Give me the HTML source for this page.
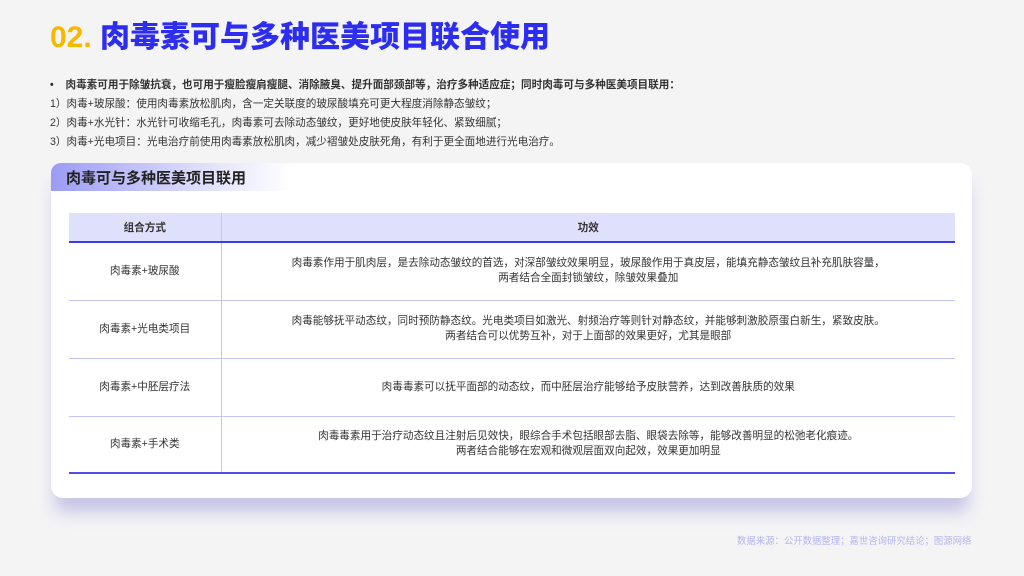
<!DOCTYPE html>
<html><head><meta charset="utf-8"><style>
*{margin:0;padding:0;box-sizing:border-box}
body{width:1024px;height:576px;background:#f4f4f5;font-family:"Liberation Sans","Noto Sans CJK SC",sans-serif;position:relative;overflow:hidden;color:#333}
.t{position:absolute;left:50px;top:12px;font-size:30px;font-weight:900;color:#2d2df2;white-space:nowrap;letter-spacing:0}
.t span{color:#f9b800}
.p{position:absolute;left:50px;font-size:10.6px;color:#333;white-space:nowrap}
.card{position:absolute;left:51px;top:163px;width:921px;height:335px;background:#fff;border-radius:12px;box-shadow:0 18px 16px -4px rgba(165,165,220,.6)}
.tab{position:absolute;left:51px;top:163px;width:240px;height:28px;border-radius:10px 0 0 0;background:linear-gradient(90deg,#9b9bf6,#dcdcfb 60%,rgba(255,255,255,0));font-size:15px;font-weight:700;color:#222;padding:4px 0 0 15px}
table{position:absolute;left:69px;top:213px;width:886px;border-collapse:collapse;font-size:10.6px;color:#333}
th{background:#dfe0fc;height:29px;font-weight:700;border-bottom:2px solid #3b3bf0}
td{height:58px;text-align:center;border-bottom:1px solid #c5c5f8;line-height:15px}
tr:last-child td{border-bottom:2px solid #5050e8;height:57px}
th:first-child,td:first-child{width:152px;border-right:1px solid #c5c5f8}
.src{position:absolute;left:737px;top:533px;font-size:9.4px;color:#b4b4f4}
</style></head><body>
<div class="t"><span>02.</span> 肉毒素可与多种医美项目联合使用</div>
<div class="p" style="top:77px;font-weight:700">•&nbsp;&nbsp;&nbsp;&nbsp;肉毒素可用于除皱抗衰，也可用于瘦脸瘦肩瘦腿、消除腋臭、提升面部颈部等，治疗多种适应症；同时肉毒可与多种医美项目联用：</div>
<div class="p" style="top:96px">1）肉毒+玻尿酸：使用肉毒素放松肌肉，含一定关联度的玻尿酸填充可更大程度消除静态皱纹；</div>
<div class="p" style="top:115px">2）肉毒+水光针：水光针可收缩毛孔，肉毒素可去除动态皱纹，更好地使皮肤年轻化、紧致细腻；</div>
<div class="p" style="top:134px">3）肉毒+光电项目：光电治疗前使用肉毒素放松肌肉，减少褶皱处皮肤死角，有利于更全面地进行光电治疗。</div>
<div class="card"></div>
<div class="tab">肉毒可与多种医美项目联用</div>
<table>
<tr><th>组合方式</th><th>功效</th></tr>
<tr><td>肉毒素+玻尿酸</td><td>肉毒素作用于肌肉层，是去除动态皱纹的首选，对深部皱纹效果明显，玻尿酸作用于真皮层，能填充静态皱纹且补充肌肤容量，<br>两者结合全面封锁皱纹，除皱效果叠加</td></tr>
<tr><td>肉毒素+光电类项目</td><td>肉毒能够抚平动态纹，同时预防静态纹。光电类项目如激光、射频治疗等则针对静态纹，并能够刺激胶原蛋白新生，紧致皮肤。<br>两者结合可以优势互补，对于上面部的效果更好，尤其是眼部</td></tr>
<tr><td>肉毒素+中胚层疗法</td><td>肉毒毒素可以抚平面部的动态纹，而中胚层治疗能够给予皮肤营养，达到改善肤质的效果</td></tr>
<tr><td>肉毒素+手术类</td><td>肉毒毒素用于治疗动态纹且注射后见效快，眼综合手术包括眼部去脂、眼袋去除等，能够改善明显的松弛老化痕迹。<br>两者结合能够在宏观和微观层面双向起效，效果更加明显</td></tr>
</table>
<div class="src">数据来源：公开数据整理；嘉世咨询研究结论；图源网络</div>
</body></html>
